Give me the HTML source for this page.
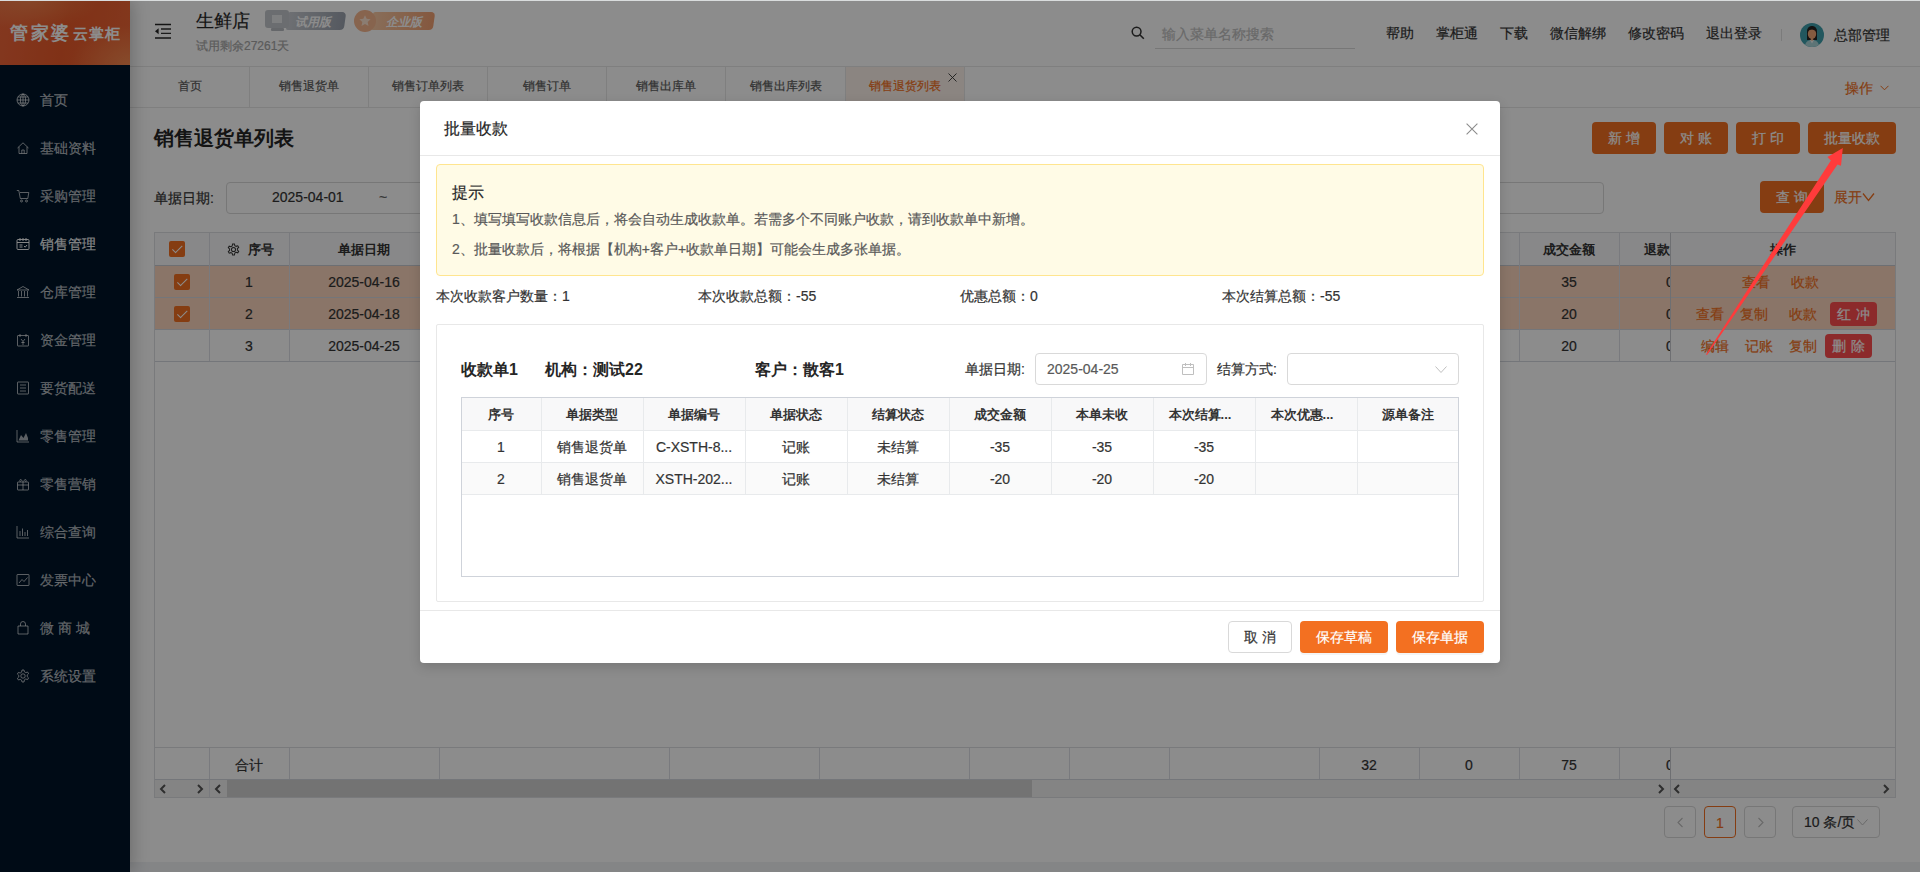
<!DOCTYPE html>
<html><head><meta charset="utf-8">
<style>
*{box-sizing:border-box;margin:0;padding:0}
html,body{width:1920px;height:872px;overflow:hidden}
body{position:relative;background:#f0f2f5;font-family:"Liberation Sans",sans-serif;color:#333;font-size:14px}
.a{position:absolute}
.t{position:absolute;white-space:nowrap;line-height:1}
.c{text-align:center}
.ls{letter-spacing:.34em;margin-right:-.34em}
svg{display:block}
/* sidebar */
#side{left:0;top:0;width:130px;height:872px;background:#001529;box-shadow:3px 0 16px rgba(0,0,0,.22);z-index:2}
#logo{left:0;top:0;width:130px;height:65px;background:radial-gradient(ellipse 70px 30px at 30px 0px,rgba(255,190,120,.35),rgba(255,190,120,0) 100%),radial-gradient(ellipse 60px 40px at 130px 65px,rgba(255,180,110,.45),rgba(255,180,110,0) 100%),linear-gradient(100deg,#f0663a 0%,#ea5a2a 50%,#ee6636 100%);overflow:hidden}
.mi{position:absolute;left:0;width:130px;height:20px}
.mi svg{position:absolute;left:16px;top:3px}
.mi span{position:absolute;left:40px;top:3px;font-size:14px;line-height:14px;color:rgba(255,255,255,.65);white-space:nowrap}
/* header */
#hdr{left:130px;top:0;width:1790px;height:67px;background:#fff;border-bottom:1px solid #e8e8e8}
#tabs{left:130px;top:67px;width:1790px;height:41px;background:#fff;border-bottom:1px solid #e8e8e8}
.tab{position:absolute;top:0;height:41px;font-size:12px;color:#595959}
.tab span{position:absolute;left:0;right:0;top:13px;text-align:center;line-height:12px}
#content{left:130px;top:108px;width:1790px;height:754px;background:#fff}
.btn{position:absolute;height:32px;background:#f37021;border-radius:4px;color:#fff;font-size:14px;text-align:center;line-height:32px}
/* table */
.vl{position:absolute;width:1px;background:#dcdfe6}
.hl{position:absolute;height:1px;background:#d3d7de}
.cb{position:absolute;width:16px;height:16px;background:#f37021;border-radius:2px}
.cb:after{content:"";position:absolute;left:5.5px;top:2px;width:4px;height:8.5px;border:solid #fff;border-width:0 1.6px 1.6px 0;transform:rotate(45deg)}
.th{position:absolute;font-size:13px;font-weight:bold;color:#333;line-height:13px;white-space:nowrap;text-align:center}
.td{position:absolute;font-size:14px;color:#333;line-height:14px;white-space:nowrap;text-align:center}
.lk{position:absolute;font-size:14px;color:#f37021;line-height:14px;white-space:nowrap}
.rb{position:absolute;height:24px;background:#ff4d4f;border-radius:4px;color:#fff;font-size:14px;line-height:24px;text-align:center}
.pg{position:absolute;top:806px;width:32px;height:32px;border:1px solid #d9d9d9;border-radius:4px;background:#fff}
#mask{left:0;top:0;width:1920px;height:872px;background:rgba(0,0,0,.45);z-index:10}
/* modal */
#modal{left:420px;top:101px;width:1080px;height:562px;background:#fff;border-radius:4px;z-index:11;box-shadow:0 4px 12px rgba(0,0,0,.15)}
.mth{position:absolute;font-size:13px;font-weight:bold;color:#333;line-height:13px;text-align:center;white-space:nowrap}
.mtd{position:absolute;font-size:14px;color:#333;line-height:14px;text-align:center;white-space:nowrap}
body{-webkit-text-stroke:.2px currentColor}
.th,.mth,[style*="font-weight:bold"]{-webkit-text-stroke:0}
</style></head><body>
<!-- PAGE -->
<div id="side" class="a">
  <div id="logo" class="a">
    <div class="t" style="left:10px;top:24px;font-size:18px;font-weight:bold;color:#fff;letter-spacing:2.5px">管家婆</div>
    <div class="t" style="left:73px;top:26px;font-size:15px;font-weight:bold;color:#fff;letter-spacing:1px">云掌柜</div>
  </div>
  <div class="mi" style="top:90px"><svg width="14" height="14" viewBox="0 0 14 14" fill="none" stroke="rgba(255,255,255,.65)" stroke-width="1" style="color:rgba(255,255,255,.65)"><circle cx="7" cy="7" r="6"/><ellipse cx="7" cy="7" rx="2.6" ry="6"/><path d="M1 7h12M2 4h10M2 10h10M7 1v12"/></svg><span style="color:rgba(255,255,255,.65)">首页</span></div>
  <div class="mi" style="top:138px"><svg width="14" height="14" viewBox="0 0 14 14" fill="none" stroke="rgba(255,255,255,.65)" stroke-width="1" style="color:rgba(255,255,255,.65)"><path d="M1.5 7L7 1.8 12.5 7M3 5.8V12.5h8V5.8M5.8 12.5V9h2.4v3.5"/></svg><span style="color:rgba(255,255,255,.65)">基础资料</span></div>
  <div class="mi" style="top:186px"><svg width="14" height="14" viewBox="0 0 14 14" fill="none" stroke="rgba(255,255,255,.65)" stroke-width="1" style="color:rgba(255,255,255,.65)"><path d="M.8 1.5h2l1.5 8h7.5l1-6H4"/><circle cx="5.5" cy="12" r="1"/><circle cx="10.5" cy="12" r="1"/></svg><span style="color:rgba(255,255,255,.65)">采购管理</span></div>
  <div class="mi" style="top:234px"><svg width="14" height="14" viewBox="0 0 14 14" fill="none" stroke="rgba(255,255,255,.95)" stroke-width="1" style="color:rgba(255,255,255,.95)"><rect x="1" y="2.5" width="12" height="10" rx="1"/><path d="M1 5.5h12M4 1v3M7 1v3M10 1v3M3.5 8h3M3.5 10h3M8 9l1.2 1.2L11 8"/></svg><span style="color:rgba(255,255,255,.95)">销售管理</span></div>
  <div class="mi" style="top:282px"><svg width="14" height="14" viewBox="0 0 14 14" fill="none" stroke="rgba(255,255,255,.65)" stroke-width="1" style="color:rgba(255,255,255,.65)"><path d="M1 5L7 1.5 13 5zM2.5 6v5.5M5.5 6v5.5M8.5 6v5.5M11.5 6v5.5M1 12.5h12"/></svg><span style="color:rgba(255,255,255,.65)">仓库管理</span></div>
  <div class="mi" style="top:330px"><svg width="14" height="14" viewBox="0 0 14 14" fill="none" stroke="rgba(255,255,255,.65)" stroke-width="1" style="color:rgba(255,255,255,.65)"><rect x="1.5" y="2.5" width="11" height="10.5" rx=".5"/><path d="M4 1v3M10 1v3M5 6l2 2.5L9 6M7 8.5V12M5.3 9.5h3.4"/></svg><span style="color:rgba(255,255,255,.65)">资金管理</span></div>
  <div class="mi" style="top:378px"><svg width="14" height="14" viewBox="0 0 14 14" fill="none" stroke="rgba(255,255,255,.65)" stroke-width="1" style="color:rgba(255,255,255,.65)"><rect x="1.5" y="1" width="11" height="12" rx=".5"/><path d="M4 4h6M4 7h6M4 10h6"/></svg><span style="color:rgba(255,255,255,.65)">要货配送</span></div>
  <div class="mi" style="top:426px"><svg width="14" height="14" viewBox="0 0 14 14" fill="none" stroke="rgba(255,255,255,.65)" stroke-width="1" style="color:rgba(255,255,255,.65)"><path d="M1 1v12h12"/><path d="M2.5 11.5L5 6l2.5 3L10 4l2 5v2.5z" fill="currentColor" stroke="none"/></svg><span style="color:rgba(255,255,255,.65)">零售管理</span></div>
  <div class="mi" style="top:474px"><svg width="14" height="14" viewBox="0 0 14 14" fill="none" stroke="rgba(255,255,255,.65)" stroke-width="1" style="color:rgba(255,255,255,.65)"><rect x="1.5" y="5" width="11" height="8" rx=".5"/><path d="M1.5 8h11M7 5v8M4.5 5C3 3 4 1 7 4.5 10 1 11 3 9.5 5"/></svg><span style="color:rgba(255,255,255,.65)">零售营销</span></div>
  <div class="mi" style="top:522px"><svg width="14" height="14" viewBox="0 0 14 14" fill="none" stroke="rgba(255,255,255,.65)" stroke-width="1" style="color:rgba(255,255,255,.65)"><path d="M1 1v12h12M4 11V6M6.5 11V3.5M9 11V7M11.5 11V5"/></svg><span style="color:rgba(255,255,255,.65)">综合查询</span></div>
  <div class="mi" style="top:570px"><svg width="14" height="14" viewBox="0 0 14 14" fill="none" stroke="rgba(255,255,255,.65)" stroke-width="1" style="color:rgba(255,255,255,.65)"><rect x="1" y="1.5" width="12" height="11" rx=".5"/><path d="M3 10l3-3.5 2 2L11.5 4.5"/></svg><span style="color:rgba(255,255,255,.65)">发票中心</span></div>
  <div class="mi" style="top:618px"><svg width="14" height="14" viewBox="0 0 14 14" fill="none" stroke="rgba(255,255,255,.65)" stroke-width="1" style="color:rgba(255,255,255,.65)"><path d="M2 5h10v8H2zM4.5 5V3a2.5 2.5 0 015 0v2"/></svg><span style="color:rgba(255,255,255,.65)">微 商 城</span></div>
  <div class="mi" style="top:666px"><svg width="14" height="14" viewBox="0 0 14 14" fill="none" stroke="rgba(255,255,255,.65)" stroke-width="1" style="color:rgba(255,255,255,.65)"><circle cx="7" cy="7" r="2.2"/><path d="M6 1h2l.4 1.8 1.4.8 1.8-.6 1 1.7-1.4 1.3v1.6l1.4 1.3-1 1.7-1.8-.6-1.4.8L8 13H6l-.4-1.8-1.4-.8-1.8.6-1-1.7 1.4-1.3V6.4L1.4 5.1l1-1.7 1.8.6 1.4-.8z"/></svg><span style="color:rgba(255,255,255,.65)">系统设置</span></div>
</div>
<div id="hdr" class="a">
  <svg class="a" style="left:25px;top:23px" width="17" height="16" viewBox="0 0 17 16"><path d="M0 1.5h16M0 15h16" stroke="#262626" stroke-width="1.3"/><path d="M6 6h10M6 10.3h10" stroke="#333" stroke-width="1.3"/><path d="M0 8.2L3.6 5.2v6z" fill="#262626"/></svg>
  <div class="t" style="left:66px;top:12px;font-size:18px;line-height:18px;color:#262626">生鲜店</div>
  <div class="t" style="left:66px;top:40px;font-size:12px;line-height:12px;color:#a6a6a6">试用剩余27261天</div>
  <!-- badge trial -->
  <div class="a" style="left:157px;top:12px;width:58px;height:18px;background:linear-gradient(90deg,#c9ccd2,#9ba2ae);border-radius:2px 4px 4px 2px;transform:skewX(-8deg)"></div>
  <div class="t" style="left:165px;top:16px;font-size:12px;line-height:12px;color:#fff;font-weight:bold;font-style:italic">试用版</div>
  <svg class="a" style="left:135px;top:10px" width="25" height="22" viewBox="0 0 25 22"><rect x="0" y="0" width="24" height="18" rx="3" fill="#c4c7cc"/><rect x="7" y="5" width="10" height="8" fill="#e6e7ea"/><rect x="6" y="18" width="13" height="3" rx="1" fill="#b8bcc2"/></svg>
  <!-- badge enterprise -->
  <div class="a" style="left:242px;top:12px;width:62px;height:18px;background:linear-gradient(90deg,#f8c9a4,#f1a072);border-radius:2px 4px 4px 2px;transform:skewX(-8deg)"></div>
  <svg class="a" style="left:224px;top:10px" width="23" height="23" viewBox="0 0 23 23"><circle cx="11" cy="11" r="11" fill="#f6b68e"/><path d="M11 5.2l1.7 3.6 3.9.5-2.9 2.7.8 3.9-3.5-1.9-3.5 1.9.8-3.9-2.9-2.7 3.9-.5z" fill="#fde3d0"/></svg>
  <div class="t" style="left:256px;top:16px;font-size:12px;line-height:12px;color:#fff;font-weight:bold;font-style:italic">企业版</div>
  <!-- search -->
  <svg class="a" style="left:1001px;top:26px" width="14" height="14" viewBox="0 0 14 14"><circle cx="5.6" cy="5.6" r="4.4" fill="none" stroke="#333" stroke-width="1.5"/><path d="M8.8 8.8L12.8 12.8" stroke="#333" stroke-width="1.6"/></svg>
  <div class="a" style="left:1025px;top:48px;width:200px;height:1px;background:#d9d9d9"></div>
  <div class="t" style="left:1032px;top:27px;font-size:14px;line-height:14px;color:#bfbfbf">输入菜单名称搜索</div>
  <div class="t" style="left:1256px;top:26px;font-size:14px;line-height:14px;color:#333">帮助</div>
  <div class="t" style="left:1306px;top:26px;font-size:14px;line-height:14px;color:#333">掌柜通</div>
  <div class="t" style="left:1370px;top:26px;font-size:14px;line-height:14px;color:#333">下载</div>
  <div class="t" style="left:1420px;top:26px;font-size:14px;line-height:14px;color:#333">微信解绑</div>
  <div class="t" style="left:1498px;top:26px;font-size:14px;line-height:14px;color:#333">修改密码</div>
  <div class="t" style="left:1576px;top:26px;font-size:14px;line-height:14px;color:#333">退出登录</div>
  <div class="a" style="left:1651px;top:29px;width:1px;height:12px;background:#e0e0e0"></div>
  <svg class="a" style="left:1670px;top:23px" width="24" height="24" viewBox="0 0 24 24"><defs><clipPath id="av"><circle cx="12" cy="12" r="12"/></clipPath></defs><circle cx="12" cy="12" r="12" fill="#3f9eab"/><g clip-path="url(#av)"><path d="M7 9c0-4 2-6 5-6s5 2 5 6v8H7z" fill="#262422"/><path d="M4.5 25c.5-5 2.5-8 7.5-8s7 3 7.5 8z" fill="#a9d3d8"/><path d="M10 17l2 3.5 2-3.5z" fill="#eef4f4"/><ellipse cx="12" cy="11" rx="4.2" ry="4.8" fill="#f0a775"/><path d="M10.8 14h2.4v3.5h-2.4z" fill="#f0a775"/><path d="M7.6 8.5c1.5-2.5 5-3 8.8-.3V6H7.6z" fill="#262422"/></g></svg>
  <div class="t" style="left:1704px;top:28px;font-size:14px;line-height:14px;color:#333">总部管理</div>
</div>
<div id="tabs" class="a">
  <div class="tab" style="left:0px;width:119px"><span>首页</span></div>
  <div class="a" style="left:119px;top:0;width:1px;height:41px;background:#e8e8e8"></div>
  <div class="tab" style="left:120px;width:118px"><span>销售退货单</span></div>
  <div class="a" style="left:238px;top:0;width:1px;height:41px;background:#e8e8e8"></div>
  <div class="tab" style="left:239px;width:118px"><span>销售订单列表</span></div>
  <div class="a" style="left:357px;top:0;width:1px;height:41px;background:#e8e8e8"></div>
  <div class="tab" style="left:358px;width:118px"><span>销售订单</span></div>
  <div class="a" style="left:476px;top:0;width:1px;height:41px;background:#e8e8e8"></div>
  <div class="tab" style="left:477px;width:118px"><span>销售出库单</span></div>
  <div class="a" style="left:595px;top:0;width:1px;height:41px;background:#e8e8e8"></div>
  <div class="tab" style="left:596px;width:119px"><span>销售出库列表</span></div>
  <div class="a" style="left:715px;top:0;width:1px;height:41px;background:#e8e8e8"></div>
  <div class="tab" style="left:716px;width:118px;background:#fef3ec;color:#f37021"><span>销售退货列表</span><svg class="a" style="left:102px;top:6px" width="9" height="9" viewBox="0 0 9 9"><path d="M.5.5l8 8M8.5.5l-8 8" stroke="#333" stroke-width=".9"/></svg></div>
  <div class="a" style="left:834px;top:0;width:1px;height:41px;background:#e8e8e8"></div>
  <div class="t" style="left:1715px;top:14px;font-size:14px;line-height:14px;color:#f37021">操作</div>
  <svg class="a" style="left:1750px;top:18px" width="9" height="6" viewBox="0 0 9 6"><path d="M.5.8l4 4 4-4" fill="none" stroke="#f37021" stroke-width="1"/></svg>
</div>
<div id="content" class="a"></div>
<div class="a" style="left:130px;top:862px;width:1790px;height:10px;background:#f0f2f5"></div>
<div class="t" style="left:154px;top:128px;font-size:20px;line-height:20px;font-weight:bold;color:#262626">销售退货单列表</div>
<div class="btn" style="left:1592px;top:122px;width:64px"><span class="ls">新增</span></div>
<div class="btn" style="left:1664px;top:122px;width:64px"><span class="ls">对账</span></div>
<div class="btn" style="left:1736px;top:122px;width:64px"><span class="ls">打印</span></div>
<div class="btn" style="left:1808px;top:122px;width:88px">批量收款</div>
<div class="t" style="left:154px;top:191px;font-size:14px;line-height:14px;color:#333">单据日期:</div>
<div class="a" style="left:226px;top:182px;width:1378px;height:32px;border:1px solid #d9d9d9;border-radius:4px;background:#fff"></div>
<div class="t" style="left:272px;top:190px;font-size:14px;line-height:14px;color:#333">2025-04-01</div>
<div class="t" style="left:379px;top:190px;font-size:14px;line-height:14px;color:#666">~</div>
<div class="btn" style="left:1760px;top:181px;width:64px"><span class="ls">查询</span></div>
<div class="t" style="left:1834px;top:190px;font-size:14px;line-height:14px;color:#f37021">展开</div>
<svg class="a" style="left:1862px;top:192px" width="13" height="10" viewBox="0 0 13 10"><path d="M1 1.5l5.5 7 5.5-7" fill="none" stroke="#f37021" stroke-width="1.3"/></svg>
<div class="a" style="left:154px;top:232px;width:1742px;height:566px;border:1px solid #dcdee2;background:#fff"></div>
<div class="a" style="left:155px;top:233px;width:1740px;height:32px;background:#f8f8f9"></div>
<div class="a" style="left:155px;top:266px;width:1740px;height:63px;background:#fbd6bd"></div>
<div class="hl" style="left:155px;top:265px;width:1740px;background:#c6cad1"></div>
<div class="hl" style="left:155px;top:297px;width:1740px"></div>
<div class="hl" style="left:155px;top:329px;width:1740px"></div>
<div class="hl" style="left:155px;top:361px;width:1740px"></div>
<div class="vl" style="left:209px;top:233px;height:128px"></div>
<div class="vl" style="left:289px;top:233px;height:128px"></div>
<div class="vl" style="left:439px;top:233px;height:128px"></div>
<div class="vl" style="left:669px;top:233px;height:128px"></div>
<div class="vl" style="left:819px;top:233px;height:128px"></div>
<div class="vl" style="left:969px;top:233px;height:128px"></div>
<div class="vl" style="left:1069px;top:233px;height:128px"></div>
<div class="vl" style="left:1169px;top:233px;height:128px"></div>
<div class="vl" style="left:1319px;top:233px;height:128px"></div>
<div class="vl" style="left:1419px;top:233px;height:128px"></div>
<div class="vl" style="left:1519px;top:233px;height:128px"></div>
<div class="vl" style="left:1619px;top:233px;height:128px"></div>
<div class="hl" style="left:155px;top:747px;width:1740px;background:#dcdee2"></div>
<div class="vl" style="left:209px;top:748px;height:31px"></div>
<div class="vl" style="left:289px;top:748px;height:31px"></div>
<div class="vl" style="left:439px;top:748px;height:31px"></div>
<div class="vl" style="left:669px;top:748px;height:31px"></div>
<div class="vl" style="left:819px;top:748px;height:31px"></div>
<div class="vl" style="left:969px;top:748px;height:31px"></div>
<div class="vl" style="left:1069px;top:748px;height:31px"></div>
<div class="vl" style="left:1169px;top:748px;height:31px"></div>
<div class="vl" style="left:1319px;top:748px;height:31px"></div>
<div class="vl" style="left:1419px;top:748px;height:31px"></div>
<div class="vl" style="left:1519px;top:748px;height:31px"></div>
<div class="vl" style="left:1619px;top:748px;height:31px"></div>
<div class="hl" style="left:155px;top:779px;width:1740px"></div>
<div class="a" style="left:155px;top:780px;width:1740px;height:17px;background:#f1f1f1"></div>
<div class="a" style="left:227px;top:780px;width:805px;height:17px;background:#d2d2d2"></div>
<div class="vl" style="left:209px;top:780px;height:17px"></div>
<svg class="a" style="left:159px;top:784px" width="8" height="10" viewBox="0 0 8 10"><path d="M6 1L2 5l4 4" fill="none" stroke="#555" stroke-width="2"/></svg>
<svg class="a" style="left:196px;top:784px" width="8" height="10" viewBox="0 0 8 10"><path d="M2 1l4 4-4 4" fill="none" stroke="#555" stroke-width="2"/></svg>
<svg class="a" style="left:214px;top:784px" width="8" height="10" viewBox="0 0 8 10"><path d="M6 1L2 5l4 4" fill="none" stroke="#555" stroke-width="2"/></svg>
<svg class="a" style="left:1657px;top:784px" width="8" height="10" viewBox="0 0 8 10"><path d="M2 1l4 4-4 4" fill="none" stroke="#555" stroke-width="2"/></svg>
<svg class="a" style="left:1673px;top:784px" width="8" height="10" viewBox="0 0 8 10"><path d="M6 1L2 5l4 4" fill="none" stroke="#555" stroke-width="2"/></svg>
<svg class="a" style="left:1882px;top:784px" width="8" height="10" viewBox="0 0 8 10"><path d="M2 1l4 4-4 4" fill="none" stroke="#555" stroke-width="2"/></svg>
<div class="a" style="left:1670px;top:233px;width:1px;height:128px;background:#c8cad0"></div>
<div class="a" style="left:1670px;top:748px;width:1px;height:49px;background:#c8cad0"></div>
<div class="cb" style="left:169px;top:241px"></div>
<svg class="a" style="left:227px;top:243px" width="13" height="13" viewBox="0 0 14 14"><circle cx="7" cy="7" r="2.2" fill="none" stroke="#333" stroke-width="1.1"/><path d="M6 1h2l.4 1.8 1.4.8 1.8-.6 1 1.7-1.4 1.3v1.6l1.4 1.3-1 1.7-1.8-.6-1.4.8L8 13H6l-.4-1.8-1.4-.8-1.8.6-1-1.7 1.4-1.3V6.4L1.4 5.1l1-1.7 1.8.6 1.4-.8z" fill="none" stroke="#333" stroke-width="1.1"/></svg>
<div class="th" style="left:248px;top:243px;text-align:left">序号</div>
<div class="th" style="left:289px;top:243px;width:150px">单据日期</div>
<div class="th" style="left:1519px;top:243px;width:100px">成交金额</div>
<div class="a" style="left:1619px;top:233px;width:51px;height:128px;overflow:hidden"><div class="th" style="left:1px;top:10px;width:100px">退款金额</div><div class="td" style="left:1px;top:42px;width:100px">0</div><div class="td" style="left:1px;top:74px;width:100px">0</div><div class="td" style="left:1px;top:106px;width:100px">0</div></div>
<div class="th" style="left:1671px;top:243px;width:224px">操作</div>
<div class="cb" style="left:174px;top:274px"></div>
<div class="td" style="left:209px;top:275px;width:80px">1</div>
<div class="td" style="left:289px;top:275px;width:150px">2025-04-16</div>
<div class="td" style="left:1519px;top:275px;width:100px">35</div>
<div class="cb" style="left:174px;top:306px"></div>
<div class="td" style="left:209px;top:307px;width:80px">2</div>
<div class="td" style="left:289px;top:307px;width:150px">2025-04-18</div>
<div class="td" style="left:1519px;top:307px;width:100px">20</div>
<div class="td" style="left:209px;top:339px;width:80px">3</div>
<div class="td" style="left:289px;top:339px;width:150px">2025-04-25</div>
<div class="td" style="left:1519px;top:339px;width:100px">20</div>
<div class="lk" style="left:1742px;top:275px">查看</div><div class="lk" style="left:1791px;top:275px">收款</div>
<div class="lk" style="left:1696px;top:307px">查看</div><div class="lk" style="left:1740px;top:307px">复制</div><div class="lk" style="left:1789px;top:307px">收款</div>
<div class="rb" style="left:1830px;top:302px;width:47px"><span class="ls">红冲</span></div>
<div class="lk" style="left:1701px;top:339px">编辑</div><div class="lk" style="left:1745px;top:339px">记账</div><div class="lk" style="left:1789px;top:339px">复制</div>
<div class="rb" style="left:1825px;top:334px;width:47px"><span class="ls">删除</span></div>
<div class="td" style="left:209px;top:758px;width:80px">合计</div>
<div class="td" style="left:1319px;top:758px;width:100px">32</div>
<div class="td" style="left:1419px;top:758px;width:100px">0</div>
<div class="td" style="left:1519px;top:758px;width:100px">75</div>
<div class="a" style="left:1619px;top:748px;width:51px;height:31px;overflow:hidden"><div class="td" style="left:1px;top:10px;width:100px">0</div></div>
<div class="pg" style="left:1664px"><svg class="a" style="left:11px;top:10px" width="8" height="11" viewBox="0 0 8 11"><path d="M6.5 1L2 5.5 6.5 10" fill="none" stroke="#bfbfbf" stroke-width="1.1"/></svg></div>
<div class="pg" style="left:1704px;border-color:#f37021"><div class="t" style="left:0;right:0;top:9px;text-align:center;color:#f37021;font-size:14px;line-height:14px">1</div></div>
<div class="pg" style="left:1744px"><svg class="a" style="left:12px;top:10px" width="8" height="11" viewBox="0 0 8 11"><path d="M1.5 1L6 5.5 1.5 10" fill="none" stroke="#bfbfbf" stroke-width="1.1"/></svg></div>
<div class="pg" style="left:1792px;width:88px"><div class="t" style="left:11px;top:8px;color:#333;font-size:14px;line-height:14px">10 条/页</div><svg class="a" style="left:64px;top:12px" width="11" height="7" viewBox="0 0 11 7"><path d="M.5.5l5 5.5 5-5.5" fill="none" stroke="#bfbfbf" stroke-width="1"/></svg></div>
<!-- MASK -->
<div id="mask" class="a"></div>
<!-- MODAL -->
<div id="modal" class="a">
<div class="t" style="left:24px;top:20px;font-size:16px;line-height:16px;color:#262626">批量收款</div>
<svg class="a" style="left:1046px;top:22px" width="12" height="12" viewBox="0 0 12 12"><path d="M.6.6l10.8 10.8M11.4.6L.6 11.4" stroke="#8c8c8c" stroke-width="1.1"/></svg>
<div class="a" style="left:0;top:54px;width:1080px;height:1px;background:#e8e8e8"></div>
<div class="a" style="left:16px;top:63px;width:1048px;height:112px;background:#fffbe6;border:1px solid #ffe58f;border-radius:4px"></div>
<div class="t" style="left:32px;top:84px;font-size:16px;line-height:16px;color:#262626">提示</div>
<div class="t" style="left:32px;top:111px;font-size:14px;line-height:14px;color:#595959">1、填写填写收款信息后，将会自动生成收款单。若需多个不同账户收款，请到收款单中新增。</div>
<div class="t" style="left:32px;top:141px;font-size:14px;line-height:14px;color:#595959">2、批量收款后，将根据【机构+客户+收款单日期】可能会生成多张单据。</div>
<div class="t" style="left:16px;top:188px;font-size:14px;line-height:14px;color:#333">本次收款客户数量：1</div>
<div class="t" style="left:278px;top:188px;font-size:14px;line-height:14px;color:#333">本次收款总额：-55</div>
<div class="t" style="left:540px;top:188px;font-size:14px;line-height:14px;color:#333">优惠总额：0</div>
<div class="t" style="left:802px;top:188px;font-size:14px;line-height:14px;color:#333">本次结算总额：-55</div>
<div class="a" style="left:16px;top:223px;width:1048px;height:278px;border:1px solid #e8e8e8;border-radius:2px"></div>
<div class="t" style="left:41px;top:261px;font-size:16px;line-height:16px;font-weight:bold;color:#262626">收款单1</div>
<div class="t" style="left:125px;top:261px;font-size:16px;line-height:16px;font-weight:bold;color:#262626">机构：测试22</div>
<div class="t" style="left:335px;top:261px;font-size:16px;line-height:16px;font-weight:bold;color:#262626">客户：散客1</div>
<div class="t" style="left:545px;top:261px;font-size:14px;line-height:14px;color:#333">单据日期:</div>
<div class="a" style="left:615px;top:252px;width:172px;height:32px;border:1px solid #d9d9d9;border-radius:4px"></div>
<div class="t" style="left:627px;top:261px;font-size:14px;line-height:14px;color:#595959">2025-04-25</div>
<svg class="a" style="left:761px;top:261px" width="14" height="14" viewBox="0 0 14 14"><path d="M1.5 2.5h11v10h-11zM1.5 5.5h11M4.5 1v3M9.5 1v3" fill="none" stroke="#bfbfbf" stroke-width="1"/></svg>
<div class="t" style="left:797px;top:261px;font-size:14px;line-height:14px;color:#333">结算方式:</div>
<div class="a" style="left:867px;top:252px;width:172px;height:32px;border:1px solid #d9d9d9;border-radius:4px"></div>
<svg class="a" style="left:1015px;top:265px" width="12" height="7" viewBox="0 0 12 7"><path d="M.5.5l5.5 6 5.5-6" fill="none" stroke="#bfbfbf" stroke-width="1"/></svg>
<div class="a" style="left:41px;top:296px;width:998px;height:180px;border:1px solid #cfd3da"></div>
<div class="a" style="left:42px;top:297px;width:996px;height:32px;background:#f8f8f9"></div>
<div class="a" style="left:42px;top:362px;width:996px;height:31px;background:#fafafa"></div>
<div class="a" style="left:42px;top:329px;width:996px;height:1px;background:#e8eaec"></div>
<div class="a" style="left:42px;top:361px;width:996px;height:1px;background:#e8eaec"></div>
<div class="a" style="left:42px;top:393px;width:996px;height:1px;background:#e8eaec"></div>
<div class="a" style="left:121px;top:297px;width:1px;height:96px;background:#e8eaec"></div>
<div class="a" style="left:223px;top:297px;width:1px;height:96px;background:#e8eaec"></div>
<div class="a" style="left:325px;top:297px;width:1px;height:96px;background:#e8eaec"></div>
<div class="a" style="left:427px;top:297px;width:1px;height:96px;background:#e8eaec"></div>
<div class="a" style="left:529px;top:297px;width:1px;height:96px;background:#e8eaec"></div>
<div class="a" style="left:631px;top:297px;width:1px;height:96px;background:#e8eaec"></div>
<div class="a" style="left:733px;top:297px;width:1px;height:96px;background:#e8eaec"></div>
<div class="a" style="left:835px;top:297px;width:1px;height:96px;background:#e8eaec"></div>
<div class="a" style="left:937px;top:297px;width:1px;height:96px;background:#e8eaec"></div>
<div class="mth" style="left:41px;top:307px;width:80px">序号</div>
<div class="mtd" style="left:41px;top:339px;width:80px">1</div>
<div class="mtd" style="left:41px;top:371px;width:80px">2</div>
<div class="mth" style="left:121px;top:307px;width:102px">单据类型</div>
<div class="mtd" style="left:121px;top:339px;width:102px">销售退货单</div>
<div class="mtd" style="left:121px;top:371px;width:102px">销售退货单</div>
<div class="mth" style="left:223px;top:307px;width:102px">单据编号</div>
<div class="mtd" style="left:223px;top:339px;width:102px">C-XSTH-8...</div>
<div class="mtd" style="left:223px;top:371px;width:102px">XSTH-202...</div>
<div class="mth" style="left:325px;top:307px;width:102px">单据状态</div>
<div class="mtd" style="left:325px;top:339px;width:102px">记账</div>
<div class="mtd" style="left:325px;top:371px;width:102px">记账</div>
<div class="mth" style="left:427px;top:307px;width:102px">结算状态</div>
<div class="mtd" style="left:427px;top:339px;width:102px">未结算</div>
<div class="mtd" style="left:427px;top:371px;width:102px">未结算</div>
<div class="mth" style="left:529px;top:307px;width:102px">成交金额</div>
<div class="mtd" style="left:529px;top:339px;width:102px">-35</div>
<div class="mtd" style="left:529px;top:371px;width:102px">-20</div>
<div class="mth" style="left:631px;top:307px;width:102px">本单未收</div>
<div class="mtd" style="left:631px;top:339px;width:102px">-35</div>
<div class="mtd" style="left:631px;top:371px;width:102px">-20</div>
<div class="mth" style="left:729px;top:307px;width:102px">本次结算...</div>
<div class="mtd" style="left:733px;top:339px;width:102px">-35</div>
<div class="mtd" style="left:733px;top:371px;width:102px">-20</div>
<div class="mth" style="left:831px;top:307px;width:102px">本次优惠...</div>
<div class="mth" style="left:937px;top:307px;width:102px">源单备注</div>
<div class="a" style="left:0;top:509px;width:1080px;height:1px;background:#e8e8e8"></div>
<div class="a" style="left:808px;top:520px;width:64px;height:32px;border:1px solid #d9d9d9;border-radius:4px;font-size:14px;line-height:30px;text-align:center;color:#333"><span class="ls">取消</span></div>
<div class="btn" style="left:880px;top:520px;width:88px;box-shadow:0 2px 0 rgba(0,0,0,.045)">保存草稿</div>
<div class="btn" style="left:976px;top:520px;width:88px;box-shadow:0 2px 0 rgba(0,0,0,.045)">保存单据</div>
</div>
<!-- ARROW -->
<svg class="a" style="left:0;top:0;z-index:20" width="1920" height="872"><path d="M1706 354.5L1830.9 160.4 1827.5 156.9 1842.8 148 1841 165.8 1837.5 164.4 1707 355z" fill="#ff3b3b"/></svg>
<div class="a" style="left:0;top:0;width:1920px;height:1px;background:#d9dcdd;z-index:30"></div>
</body></html>
